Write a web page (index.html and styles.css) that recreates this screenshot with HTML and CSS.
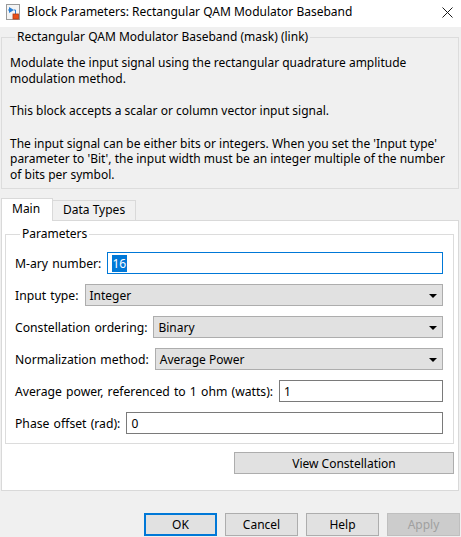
FILE: index.html
```html
<!DOCTYPE html>
<html>
<head>
<meta charset="utf-8">
<link rel="stylesheet" href="styles.css">
</head>
<body>
<div class="window">
  <div class="titlebar">
    <svg class="appicon" width="14" height="16" viewBox="0 0 14 16">
      <rect x="0.5" y="0.5" width="13" height="15" fill="#f4f4f4" stroke="#9a9a9a"/>
      <path d="M3 3 L3 9 L8 6 Z" fill="#2a7fd4"/>
      <path d="M2 6 H3 M8 6 H9.5 V10" stroke="#2a7fd4" fill="none"/>
      <rect x="7" y="10" width="5.5" height="5" fill="#e8501a" stroke="#b33a10" stroke-width="0.8"/>
    </svg>
    <span class="title">Block Parameters: Rectangular QAM Modulator Baseband</span>
    <svg class="close" width="11" height="11" viewBox="0 0 11 11">
      <path d="M0.5 0.5 L10.5 10.5 M10.5 0.5 L0.5 10.5" stroke="#1a1a1a" stroke-width="1"/>
    </svg>
  </div>
  <div class="body">
    <fieldset class="group desc">
      <legend>Rectangular QAM Modulator Baseband (mask) (link)</legend>
      <p>Modulate the input signal using the rectangular quadrature amplitude modulation method.</p>
      <p>This block accepts a scalar or column vector input signal.</p>
      <p>The input signal can be either bits or integers. When you set the 'Input type' parameter to 'Bit', the input width must be an integer multiple of the number of bits per symbol.</p>
    </fieldset>
    <div class="tabs">
      <div class="tab active">Main</div>
      <div class="tab">Data Types</div>
    </div>
    <div class="panel">
      <fieldset class="group params">
        <legend>Parameters</legend>
        <div class="row">
          <span class="label">M-ary number:</span>
          <div class="field edit focus"><span class="sel">16</span></div>
        </div>
        <div class="row">
          <span class="label">Input type:</span>
          <div class="field combo"><span>Integer</span><i class="arrow"></i></div>
        </div>
        <div class="row">
          <span class="label">Constellation ordering:</span>
          <div class="field combo"><span>Binary</span><i class="arrow"></i></div>
        </div>
        <div class="row">
          <span class="label">Normalization method:</span>
          <div class="field combo"><span>Average Power</span><i class="arrow"></i></div>
        </div>
        <div class="row">
          <span class="label">Average power, referenced to 1 ohm (watts):</span>
          <div class="field edit"><span>1</span></div>
        </div>
        <div class="row">
          <span class="label">Phase offset (rad):</span>
          <div class="field edit"><span>0</span></div>
        </div>
      </fieldset>
      <div class="viewrow">
        <div class="btn view">View Constellation</div>
      </div>
    </div>
    <div class="buttons">
      <div class="btn default">OK</div>
      <div class="btn">Cancel</div>
      <div class="btn">Help</div>
      <div class="btn disabled">Apply</div>
    </div>
  </div>
</div>
</body>
</html>
```

FILE: styles.css
```css
html, body {
  margin: 0;
  padding: 0;
}
body {
  width: 461px;
  height: 537px;
  overflow: hidden;
  background: #f0f0f0;
  font-family: "Noto Sans", "Open Sans", sans-serif;
  font-size: 12px;
  color: #000;
}
.window {
  width: 461px;
  height: 537px;
}
.titlebar {
  height: 27px;
  background: #fff;
  display: flex;
  align-items: center;
}
.appicon {
  margin-left: 6px;
  margin-top: -3px;
  flex: none;
}
.title {
  margin-left: 7px;
  font-size: 12px;
  line-height: 16px;
  flex: 1;
  margin-top: -3px;
}
.close {
  margin-right: 8px;
  margin-top: -3px;
  flex: none;
}
.body {
  padding: 3px 0 0 1px;
}
.group {
  margin: 0;
  border: 1px solid #dcdcdc;
  min-width: 0;
}
.group legend {
  font-size: 12px;
  line-height: 14px;
  padding: 0 2px;
  margin-left: 5px;
}
.desc {
  width: 458px;
  box-sizing: border-box;
  padding: 11px 8px 6px 8px;
}
.desc p {
  margin: 0 0 17px 0;
  line-height: 15.5px;
}
.desc p:last-child {
  margin-bottom: 0;
}
.tabs {
  display: flex;
  align-items: flex-end;
  margin-top: 8px;
  height: 23px;
}
.tab {
  box-sizing: border-box;
  height: 20px;
  border: 1px solid #d9d9d9;
  border-bottom: none;
  background: #f0f0f0;
  padding: 0 0 0 10px;
  line-height: 18px;
}
.tab.active {
  height: 23px;
  background: #fff;
  width: 52px;
  line-height: 20px;
  position: relative;
  z-index: 1;
  margin-bottom: -1px;
}
.tab + .tab {
  border-left: none;
  width: 83px;
}
.panel {
  box-sizing: border-box;
  width: 458px;
  height: 271px;
  background: #fff;
  border: 1px solid #d9d9d9;
  padding: 6px 4px 0 3px;
}
.params {
  padding: 11px 10px 9px 9px;
}
.row {
  display: flex;
  align-items: center;
  height: 22px;
  margin-top: 10px;
  gap: 6px;
}
.row:first-of-type {
  margin-top: 0;
}
.label {
  white-space: nowrap;
  flex: none;
  font-size: 12.2px;
  word-spacing: 1px;
}
.field {
  flex: 1;
  box-sizing: border-box;
  height: 22px;
  display: flex;
  align-items: center;
  padding-left: 4px;
}
.edit {
  border: 1px solid #7a7a7a;
  background: #fff;
}
.edit.focus {
  border-color: #0078d7;
}
.sel {
  background: #0078d7;
  color: #fff;
  line-height: 17px;
  padding: 0 1px 0 0;
}
.combo {
  border: 1px solid #adadad;
  background: #e1e1e1;
  justify-content: space-between;
  padding-right: 5px;
}
.arrow {
  width: 0;
  height: 0;
  border-left: 4px solid transparent;
  border-right: 4px solid transparent;
  border-top: 4px solid #000;
  margin-top: 1px;
}
.viewrow {
  display: flex;
  justify-content: flex-end;
  margin-top: 8px;
}
.btn {
  box-sizing: border-box;
  height: 23px;
  width: 73px;
  border: 1px solid #adadad;
  background: #e1e1e1;
  display: flex;
  align-items: center;
  justify-content: center;
}
.btn.view {
  width: 220px;
  height: 22px;
}
.buttons {
  display: flex;
  justify-content: flex-end;
  gap: 8px;
  margin-top: 22px;
  padding-right: 1px;
}
.btn.default {
  border: 2px solid #0078d7;
}
.btn.disabled {
  background: #cccccc;
  border-color: #bfbfbf;
  color: #a0a0a0;
}
```
